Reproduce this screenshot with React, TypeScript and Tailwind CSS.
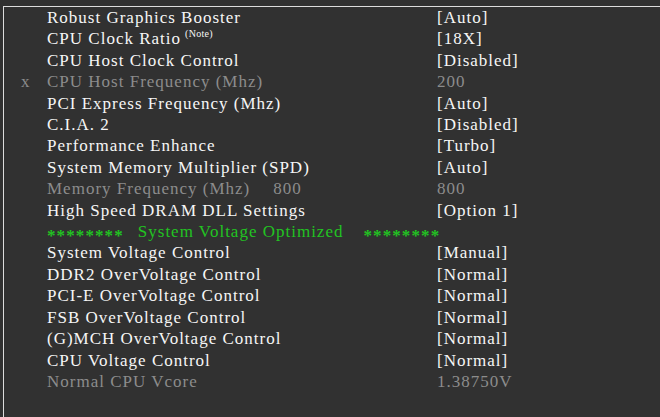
const rows: { label: string; value: string; dim?: boolean; mark?: string; note?: boolean; extra?: string }[] = [
  { label: 'Robust Graphics Booster', value: '[Auto]' },
  { label: 'CPU Clock Ratio', value: '[18X]', note: true },
  { label: 'CPU Host Clock Control', value: '[Disabled]' },
  { label: 'CPU Host Frequency (Mhz)', value: '200', dim: true, mark: 'x' },
  { label: 'PCI Express Frequency (Mhz)', value: '[Auto]' },
  { label: 'C.I.A. 2', value: '[Disabled]' },
  { label: 'Performance Enhance', value: '[Turbo]' },
  { label: 'System Memory Multiplier (SPD)', value: '[Auto]' },
  { label: 'Memory Frequency (Mhz)', value: '800', dim: true, extra: '800' },
  { label: 'High Speed DRAM DLL Settings', value: '[Option 1]' },
];

const rows2: { label: string; value: string; dim?: boolean }[] = [
  { label: 'System Voltage Control', value: '[Manual]' },
  { label: 'DDR2 OverVoltage Control', value: '[Normal]' },
  { label: 'PCI-E OverVoltage Control', value: '[Normal]' },
  { label: 'FSB OverVoltage Control', value: '[Normal]' },
  { label: '(G)MCH OverVoltage Control', value: '[Normal]' },
  { label: 'CPU Voltage Control', value: '[Normal]' },
  { label: 'Normal CPU Vcore', value: '1.38750V', dim: true },
];

function Row({ label, value, dim, mark, note, extra }: { label: string; value: string; dim?: boolean; mark?: string; note?: boolean; extra?: string }) {
  const color = dim ? 'text-[#8c8c8c]' : 'text-[#f6f6f6]';
  return (
    <div className={`flex ${color}`}>
      <div className="w-[43px] pl-[17px]">{mark}</div>
      <div className="w-[390px] flex">
        <span>{label}</span>
        {note && <span className="text-[10px] leading-none tracking-[0.3px] ml-[4px] mt-[1px]">(Note)</span>}
        {extra && <span className="ml-[23px]">{extra}</span>}
      </div>
      <div>{value}</div>
    </div>
  );
}

export default function App() {
  return (
    <div className="w-[660px] h-[417px] bg-[#313131] pt-[6px] pl-[3px] overflow-hidden font-['Liberation_Serif','Times_New_Roman',serif]">
      <div className="h-full border-t border-l border-[#dcdcdc] text-[17px] leading-[21.4px] tracking-[1px]">
        {rows.map(r => (
          <Row key={r.label} {...r} />
        ))}
        <div className="flex text-[#22c322]">
          <div className="w-[43px]" />
          <span className="tracking-[1.1px] translate-y-[4px] font-bold">********</span>
          <span className="ml-[14px]">System Voltage Optimized</span>
          <span className="ml-[20px] tracking-[1.1px] translate-y-[4px] font-bold">********</span>
        </div>
        {rows2.map(r => (
          <Row key={r.label} {...r} />
        ))}
      </div>
    </div>
  );
}
